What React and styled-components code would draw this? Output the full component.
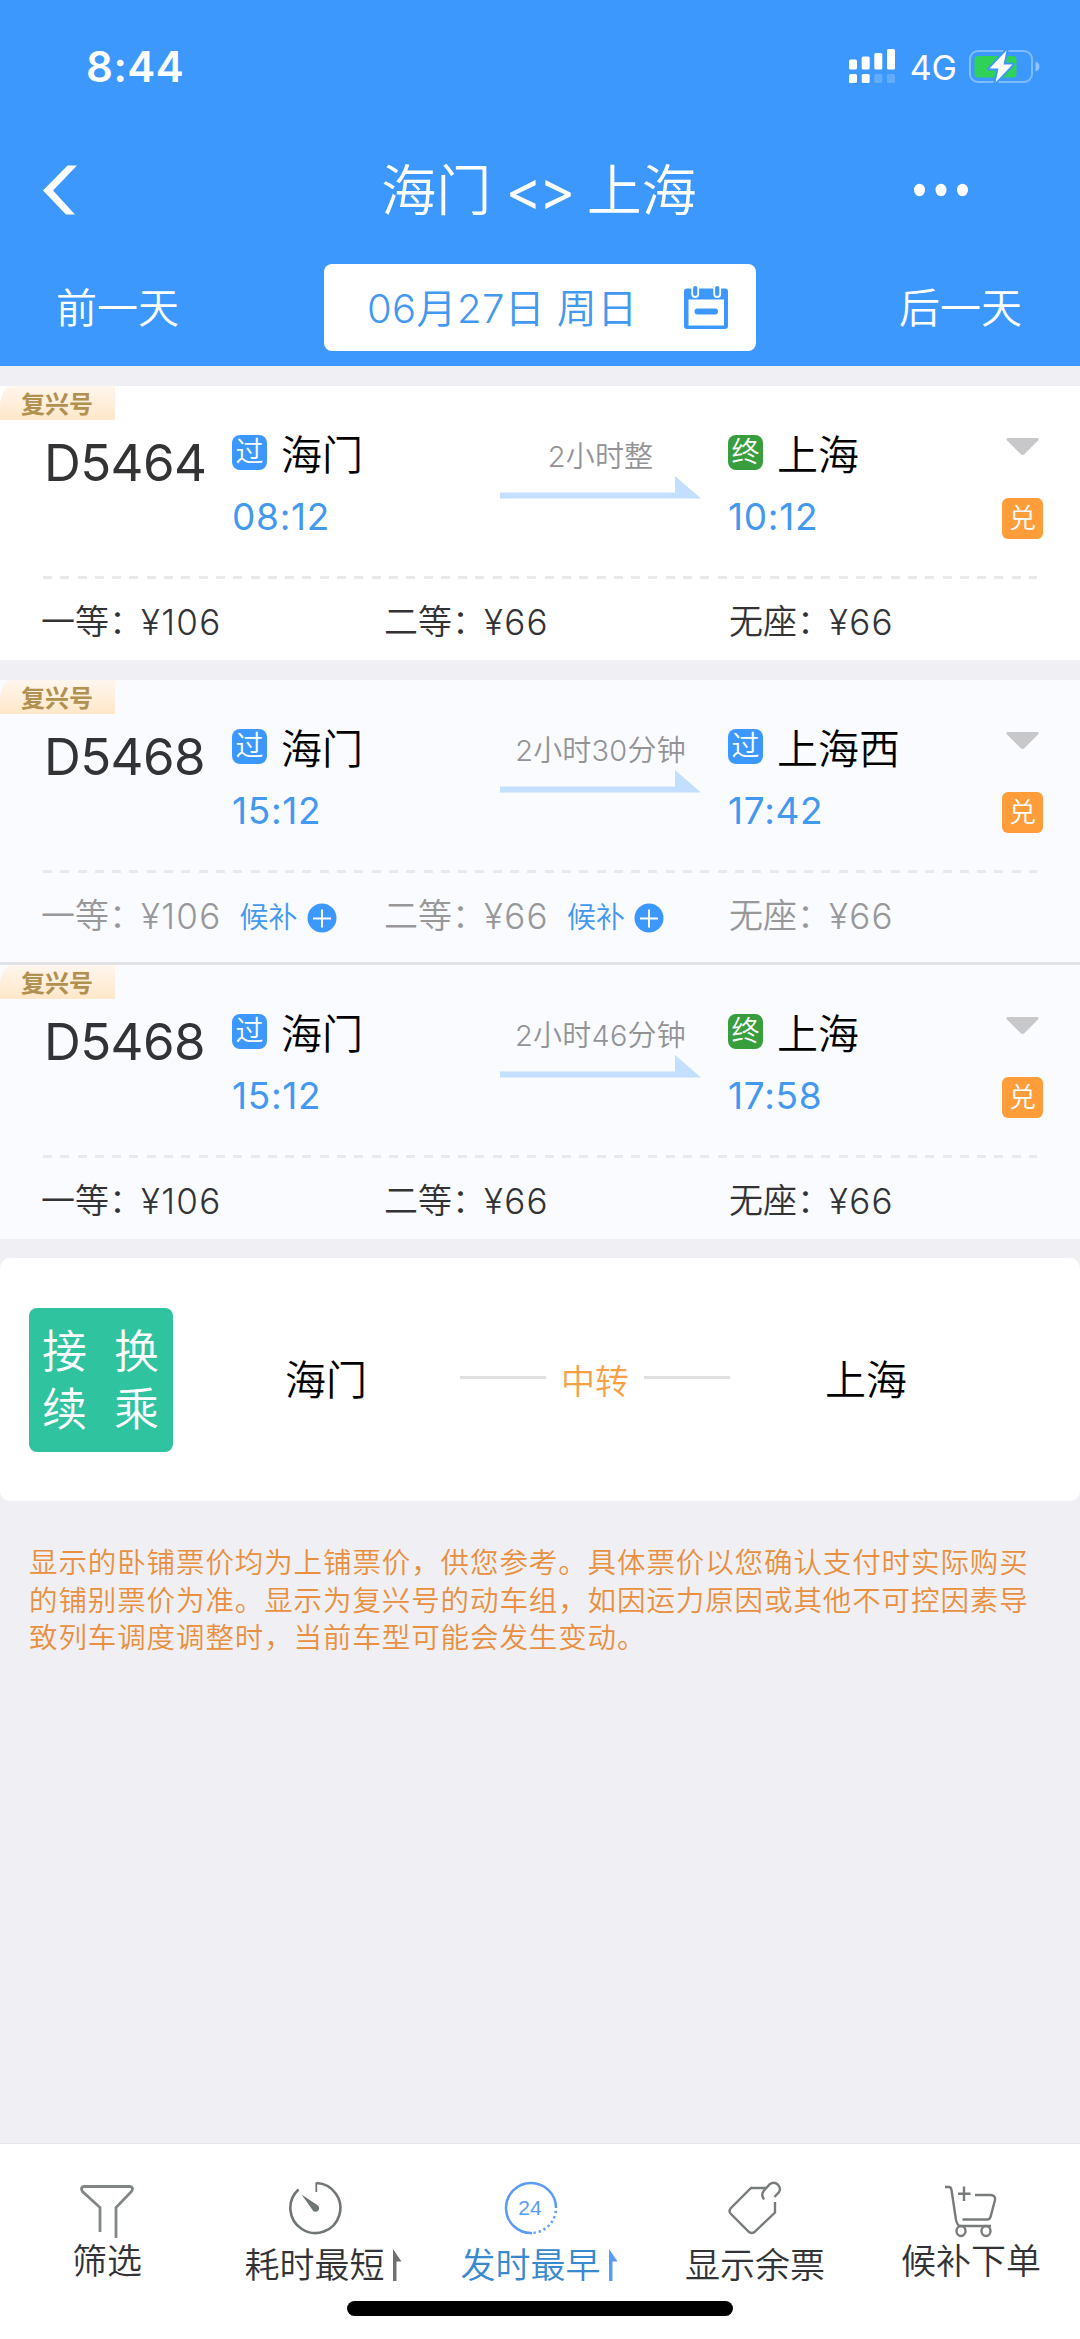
import React from "react";
import styled, { createGlobalStyle } from "styled-components";

//Data
const trains = [
  {
    id: 1,
    code: "D5464",
    from: { type: "过", name: "海门", time: "08:12" },
    to: { type: "终", name: "上海", time: "10:12" },
    duration: "2小时整",
    seats: [
      { name: "一等", price: 106 },
      { name: "二等", price: 66 },
      { name: "无座", price: 66 },
    ],
  },
  {
    id: 2,
    code: "D5468",
    tinted: true,
    soldOut: true,
    from: { type: "过", name: "海门", time: "15:12" },
    to: { type: "过", name: "上海西", time: "17:42" },
    duration: "2小时30分钟",
    seats: [
      { name: "一等", price: 106, waitlist: true },
      { name: "二等", price: 66, waitlist: true },
      { name: "无座", price: 66 },
    ],
  },
  {
    id: 3,
    code: "D5468",
    tinted: true,
    from: { type: "过", name: "海门", time: "15:12" },
    to: { type: "终", name: "上海", time: "17:58" },
    duration: "2小时46分钟",
    seats: [
      { name: "一等", price: 106 },
      { name: "二等", price: 66 },
      { name: "无座", price: 66 },
    ],
  },
];

//Icons
const SignalIcon = () => (
  <svg width="46" height="35" viewBox="0 0 46 35" fill="#fff">
    <rect x="0" y="10.5" width="8" height="10" rx="1.5" />
    <rect x="12.7" y="7.5" width="8" height="13" rx="1.5" />
    <rect x="25.3" y="4" width="8" height="16.5" rx="1.5" />
    <rect x="38" y="0" width="8" height="20.5" rx="1.5" />
    <rect x="0" y="25" width="8" height="9" rx="1.5" />
    <rect x="12.7" y="25" width="8" height="9" rx="1.5" />
    <rect x="25.3" y="25" width="8" height="9" rx="1.5" opacity="0.2" />
    <rect x="38" y="25" width="8" height="9" rx="1.5" opacity="0.2" />
  </svg>
);

const BatteryIcon = () => (
  <svg width="72" height="36" viewBox="0 0 72 36">
    <rect x="1" y="3" width="62" height="31" rx="8" fill="none" stroke="#7fbcfe" strokeWidth="2" />
    <path d="M66.5 13.5c2.5.8 4 2.7 4 5s-1.5 4.2-4 5z" fill="#8fc5fe" />
    <rect x="5.5" y="8" width="42" height="21.5" rx="3.5" fill="#30d158" />
    <path
      d="M37.5 2.5 20.5 20.5h9L26.5 34.5 43.5 16.5h-9z"
      fill="#fff"
      stroke="#3c98fd"
      strokeWidth="4"
      strokeLinejoin="round"
      paintOrder="stroke"
    />
  </svg>
);

const BackIcon = () => (
  <svg width="36" height="50" viewBox="0 0 36 50" fill="#fff">
    <path d="M24.5.5H34l-24 25 22 24h-9L0 25.5z" />
  </svg>
);

const MoreIcon = () => (
  <svg width="56" height="14" viewBox="0 0 56 14" fill="#fff">
    <ellipse cx="6.5" cy="7" rx="5.5" ry="6.2" />
    <ellipse cx="28" cy="7" rx="5.5" ry="6.2" />
    <ellipse cx="49.5" cy="7" rx="5.5" ry="6.2" />
  </svg>
);

const CalendarIcon = () => (
  <svg width="44" height="45" viewBox="0 0 44 45">
    <path d="M3 3.5h38a3 3 0 0 1 3 3V41a3 3 0 0 1-3 3H3a3 3 0 0 1-3-3V6.5a3 3 0 0 1 3-3z" fill="#3c98fd" />
    <rect x="4.5" y="14.5" width="35.5" height="26" fill="#fff" />
    <rect x="10.5" y="23.5" width="23.5" height="6" rx="3" fill="#3c98fd" />
    <rect x="8.2" y="0" width="6" height="12" rx="3" fill="#3c98fd" stroke="#fff" strokeWidth="1.8" />
    <rect x="30.2" y="0" width="6" height="12" rx="3" fill="#3c98fd" stroke="#fff" strokeWidth="1.8" />
  </svg>
);

const ArrowLine = () => (
  <svg width="201" height="23" viewBox="0 0 201 23" fill="#c4dffd">
    <path d="M0 16.5h175V0l26 22.5H0z" />
  </svg>
);

const CaretIcon = () => (
  <svg width="33" height="18" viewBox="0 0 33 18" fill="#c8c8ca">
    <path d="M1.5 0h30q2 1 .5 2.5L18.5 16q-2 2-4 0L1 2.5Q-.5 1 1.5 0z" />
  </svg>
);

const PlusIcon = () => (
  <svg width="30" height="30" viewBox="0 0 30 30">
    <circle cx="15" cy="15" r="14.5" fill="#3c98fd" />
    <path d="M6 15.5h18M15 6.5v18" stroke="#fff" strokeWidth="2" />
  </svg>
);

const FilterIcon = () => (
  <svg width="54" height="54" viewBox="0 0 54 54" fill="none" stroke="#818786" strokeWidth="2.8">
    <path d="M20 47V22.5L2.5 6.5Q0 2 4 1.5h46q4 .5 1.5 5L36 22.5V53" />
  </svg>
);

const TimerIcon = () => (
  <svg width="54" height="54" viewBox="0 0 54 54" fill="none" stroke="#707675" strokeWidth="2.6">
    <path d="M10.5 8.5A25 25 0 1 0 28.5 2" />
    <path d="M28.3 11V1.5" strokeWidth="1.8" />
    <path d="M13.5 13.5 30 24.5a3.6 3.6 0 1 1-5.5 4.5z" fill="#707675" stroke="none" />
  </svg>
);

const DepartIcon = () => (
  <svg width="54" height="54" viewBox="0 0 54 54" fill="none" stroke="#5a9bf8" strokeWidth="2.5">
    <path d="M28 52A25 25 0 1 1 52 27" />
    <path d="M52 27A25 25 0 0 1 27 52" strokeDasharray="2.2 3" strokeDashoffset="-3" />
    <text x="26" y="34" textAnchor="middle" fontFamily="Liberation Sans, Arial, sans-serif" fontSize="21" fill="#5a9bf8" stroke="none">
      24
    </text>
  </svg>
);

const TagIcon = () => (
  <svg width="54" height="54" viewBox="0 0 54 54" fill="none" stroke="#777c7b" strokeWidth="2.4">
    <path d="M38 7H23L2.5 27.5q-2 2.5 0 5L21 51q3 2 5.5 0L47 31.5V21" />
    <path d="M36 18.5q-3.5-5 0-9l6-6.5c6-4 12 3 9 8l-4.5 5" />
  </svg>
);

const CartIcon = () => (
  <svg width="54" height="54" viewBox="0 0 54 54" fill="none" stroke="#777c7b" strokeWidth="2.4">
    <path d="M1 2h4q2 0 2.5 3L12 35q1.5 6 4 6h31" />
    <path d="M31 10h16q5 1 4 5l-4.5 17q-1 2.5-3 2.5H18.5" />
    <path d="M20 1.5V16M14 8.8h12.5" />
    <ellipse cx="17" cy="46" rx="4.5" ry="5" />
    <ellipse cx="42" cy="46" rx="4.5" ry="5" />
  </svg>
);

const SortIcon = ({ active }) => (
  <svg width="9" height="32" viewBox="0 0 9 32" fill={active ? "#5a9bf8" : "#707070"}>
    <path d="M0 0 8.5 12.5H3.5V32H0z" />
  </svg>
);

const tabs = [
  { name: "筛选", icon: <FilterIcon />, raised: true },
  { name: "耗时最短", icon: <TimerIcon />, sort: true },
  { name: "发时最早", icon: <DepartIcon />, sort: true, active: true },
  { name: "显示余票", icon: <TagIcon /> },
  { name: "候补下单", icon: <CartIcon />, raised: true },
];

const Station = ({ station }) => {
  return (
    <StationBox>
      <StationName>
        <StationType $end={station.type === "终"}>{station.type}</StationType>
        <span>{station.name}</span>
      </StationName>
      <Time>{station.time}</Time>
    </StationBox>
  );
};

const Train = ({ train }) => {
  return (
    <TrainCard $tinted={train.tinted} $tall={train.soldOut}>
      <Ribbon>复兴号</Ribbon>
      <Trip>
        <Code>{train.code}</Code>
        <Station station={train.from} />
        <Duration>
          <span>{train.duration}</span>
          <ArrowLine />
        </Duration>
        <Station station={train.to} />
        <Extra>
          <CaretIcon />
          <Exchange>兑</Exchange>
        </Extra>
      </Trip>
      <Dashes />
      <Seats $soldOut={train.soldOut}>
        {train.seats.map((seat) => (
          <Seat key={seat.name}>
            <SeatName>{seat.name}：</SeatName>
            <Price>¥{seat.price}</Price>
            {seat.waitlist && (
              <Waitlist>
                候补
                <PlusIcon />
              </Waitlist>
            )}
          </Seat>
        ))}
      </Seats>
    </TrainCard>
  );
};

const App = () => {
  return (
    <>
      <GlobalStyle />
      <Page>
        <Header>
          <StatusBar>
            <Clock>8:44</Clock>
            <StatusIcons>
              <SignalIcon />
              <Network>4G</Network>
              <BatteryIcon />
            </StatusIcons>
          </StatusBar>
          <TitleBar>
            <BackIcon />
            <Title>
              海门 <Swap>&lt;&gt;</Swap> 上海
            </Title>
            <MoreIcon />
          </TitleBar>
          <DateBar>
            <DayLink>前一天</DayLink>
            <DateBox>
              <DateText>06月27日 周日</DateText>
              <CalendarIcon />
            </DateBox>
            <DayLink>后一天</DayLink>
          </DateBar>
        </Header>

        <Group>
          <Train train={trains[0]} />
        </Group>
        <Group>
          <Train train={trains[1]} />
          <Train train={trains[2]} />
        </Group>

        <Transfer>
          <TransferBadge>
            <span>接</span>
            <span>换</span>
            <span>续</span>
            <span>乘</span>
          </TransferBadge>
          <TransferStation>海门</TransferStation>
          <Via>
            <ViaLine />
            <span>中转</span>
            <ViaLine />
          </Via>
          <TransferStation>上海</TransferStation>
        </Transfer>

        <Note>
          显示的卧铺票价均为上铺票价，供您参考。具体票价以您确认支付时实际购买的铺别票价为准。显示为复兴号的动车组，如因运力原因或其他不可控因素导致列车调度调整时，当前车型可能会发生变动。
        </Note>

        <Footer>
          <Tabs>
            {tabs.map((tab) => (
              <Tab key={tab.name} $raised={tab.raised}>
                <TabIcon $sort={tab.sort} $raised={tab.raised}>
                  {tab.icon}
                </TabIcon>
                <TabLabel $active={tab.active}>
                  {tab.name}
                  {tab.sort && <SortIcon active={tab.active} />}
                </TabLabel>
              </Tab>
            ))}
          </Tabs>
          <HomeBar />
        </Footer>
      </Page>
    </>
  );
};

const GlobalStyle = createGlobalStyle`
  * {
    margin: 0;
    padding: 0;
    box-sizing: border-box;
  }
  body {
    background: #f0eff4;
    font-family: Inter, "Noto Sans CJK SC", sans-serif;
    font-weight: 350;
  }
  svg {
    display: block;
    flex: none;
  }
`;

const Page = styled.div`
  width: 1080px;
  height: 2339px;
  display: flex;
  flex-direction: column;
  overflow: hidden;
  background: #f0eff4;
`;

const Header = styled.header`
  height: 366px;
  flex: none;
  color: #fff;
  background: #3c98fd;
`;

const StatusBar = styled.div`
  height: 134px;
  padding: 0 39px 2px 86px;
  display: flex;
  align-items: center;
  justify-content: space-between;
`;

const Clock = styled.span`
  font-size: 42px;
  font-weight: 600;
  letter-spacing: 0.5px;
`;

const StatusIcons = styled.div`
  display: flex;
  align-items: center;
`;

const Network = styled.span`
  margin: 4px 12px 0 15px;
  font-size: 34px;
  font-weight: 400;
  line-height: 34px;
`;

const TitleBar = styled.div`
  height: 112px;
  padding: 0 111px 0 43px;
  display: flex;
  align-items: center;
`;

const Title = styled.h1`
  width: 600px;
  margin: 0 74px 0 160px;
  font-size: 55px;
  line-height: 80px;
  font-weight: 350;
  text-align: center;
  word-spacing: -1px;
`;

const Swap = styled.span`
  font-weight: 400;
  letter-spacing: -3px;
`;

const DateBar = styled.div`
  height: 120px;
  padding: 0 58px 0 56px;
  display: flex;
  align-items: center;
  justify-content: space-between;
`;

const DayLink = styled.span`
  margin-bottom: 2px;
  font-size: 41px;
`;

const DateBox = styled.div`
  width: 432px;
  height: 87px;
  margin: 3px 0 0 2px;
  padding: 0 28px 0 43px;
  display: flex;
  align-items: center;
  justify-content: space-between;
  border-radius: 8px;
  background: #fff;
  color: #4398f0;
  font-size: 40px;
  letter-spacing: 0.4px;
  white-space: nowrap;
`;

const DateText = styled.span`
  margin-bottom: 4px;
`;

const Group = styled.section`
  flex: none;
  margin-top: 20px;
`;

const TrainCard = styled.article`
  height: ${(props) => (props.$tall ? "285px" : "274px")};
  border-bottom: ${(props) => (props.$tall ? "3px solid #e1e2e6" : "none")};
  background: ${(props) => (props.$tinted ? "#f9fbff" : "#fff")};
`;

const Ribbon = styled.div`
  width: 115px;
  height: 34px;
  padding: 2px 0 0 21px;
  border-top-left-radius: 12px 20px;
  background: linear-gradient(#fff6ee, #ffe7c9);
  color: #b29050;
  font-size: 24px;
  line-height: 34px;
  font-weight: 700;
`;

const Trip = styled.div`
  height: 156px;
  display: grid;
  grid-template-columns: 232px 268px 228px 274px 1fr;
`;

const Code = styled.h2`
  padding: 12px 0 0 44px;
  font-size: 51px;
  line-height: 62px;
  font-weight: 400;
  letter-spacing: -0.6px;
  color: #333336;
`;

const StationBox = styled.div`
  padding-top: 8px;
`;

const StationName = styled.div`
  height: 54px;
  display: flex;
  gap: 14px;
  color: #000;
  font-size: 41px;
  line-height: 54px;
`;

const StationType = styled.span`
  width: 35px;
  height: 35px;
  margin-top: 7px;
  border-radius: 8px;
  background: ${(props) => (props.$end ? "#379d3d" : "#3c98fd")};
  color: #fff;
  font-size: 28px;
  line-height: 34px;
  text-align: center;
`;

const Time = styled.div`
  padding-top: 10px;
  color: #4398f0;
  font-size: 37px;
  line-height: 50px;
  font-weight: 400;
  letter-spacing: 0.7px;
`;

const Duration = styled.div`
  width: 201px;
  padding-top: 17px;
  display: flex;
  flex-direction: column;
  align-items: center;
  color: #939396;
  font-size: 29px;
  line-height: 40px;
  letter-spacing: 0.2px;
  svg {
    margin-top: -1px;
  }
`;

const Extra = styled.div`
  padding-top: 18px;
  display: flex;
  flex-direction: column;
  align-items: flex-start;
  svg {
    margin-left: 4px;
  }
`;

const Exchange = styled.span`
  width: 41px;
  height: 41px;
  margin-top: 42px;
  border-radius: 6px;
  background: #ff9d3b;
  color: #fff;
  font-size: 27px;
  line-height: 41px;
  text-align: center;
`;

const Dashes = styled.div`
  height: 3px;
  margin: 0 43px;
  background: repeating-linear-gradient(90deg, #e9e9eb 0 9px, transparent 9px 17.3px);
`;

const Seats = styled.div`
  padding: 18px 0 0 41px;
  display: grid;
  grid-template-columns: 343px 345px 1fr;
  color: ${(props) => (props.$soldOut ? "#98989b" : "#333336")};
  font-size: 34px;
  line-height: 50px;
`;

const Seat = styled.div`
  display: flex;
  align-items: center;
`;

const SeatName = styled.span`
  width: 100px;
  white-space: nowrap;
`;

const Price = styled.span`
  font-size: 35px;
  letter-spacing: 1.3px;
`;

const Waitlist = styled.span`
  margin-top: 4px;
  padding-left: 18px;
  display: flex;
  align-items: center;
  gap: 9px;
  color: #4398f0;
  font-size: 29px;
  line-height: 40px;
`;

const Transfer = styled.section`
  height: 243px;
  flex: none;
  margin-top: 19px;
  padding-left: 29px;
  display: grid;
  grid-template-columns: 256px 175px 365px 1fr;
  align-items: center;
  border-radius: 10px;
  background: #fff;
`;

const TransferBadge = styled.div`
  width: 144px;
  height: 144px;
  padding: 15px 0 13px 13px;
  display: grid;
  grid-template-columns: 72px 72px;
  border-radius: 8px;
  background: #30c3a0;
  color: #fff;
  font-size: 45px;
  line-height: 58px;
`;

const TransferStation = styled.span`
  margin-bottom: 6px;
  color: #000;
  font-size: 41px;
`;

const Via = styled.div`
  width: 270px;
  display: flex;
  align-items: center;
  justify-content: space-between;
  color: #f99f45;
  font-size: 34px;
`;

const ViaLine = styled.i`
  width: 86px;
  height: 3px;
  margin-bottom: 5px;
  background: #e0e0e0;
`;

const Note = styled.p`
  flex: 1;
  padding: 43px 44px 0 29px;
  color: #e8903f;
  font-size: 28.5px;
  line-height: 37.6px;
  letter-spacing: 0.9px;
`;

const Footer = styled.footer`
  height: 196px;
  flex: none;
  border-top: 1px solid #e8e7ec;
  background: #fff;
`;

const Tabs = styled.nav`
  width: 1078px;
  height: 157px;
  display: grid;
  grid-template-columns: repeat(5, 216px);
  margin-left: -1px;
`;

const Tab = styled.div`
  padding-top: ${(props) => (props.$raised ? "41px" : "37px")};
  display: flex;
  flex-direction: column;
  align-items: center;
`;

const TabIcon = styled.div`
  height: ${(props) => (props.$raised ? "50px" : "58px")};
  margin-right: ${(props) => (props.$sort ? "17px" : "0")};
`;

const TabLabel = styled.div`
  height: 52px;
  display: flex;
  align-items: center;
  gap: 8px;
  color: ${(props) => (props.$active ? "#3889cd" : "#333336")};
  font-size: 35px;
  line-height: 52px;
`;

const HomeBar = styled.div`
  width: 386px;
  height: 15px;
  margin: 0 auto;
  border-radius: 8px;
  background: #000;
`;

export default App;
